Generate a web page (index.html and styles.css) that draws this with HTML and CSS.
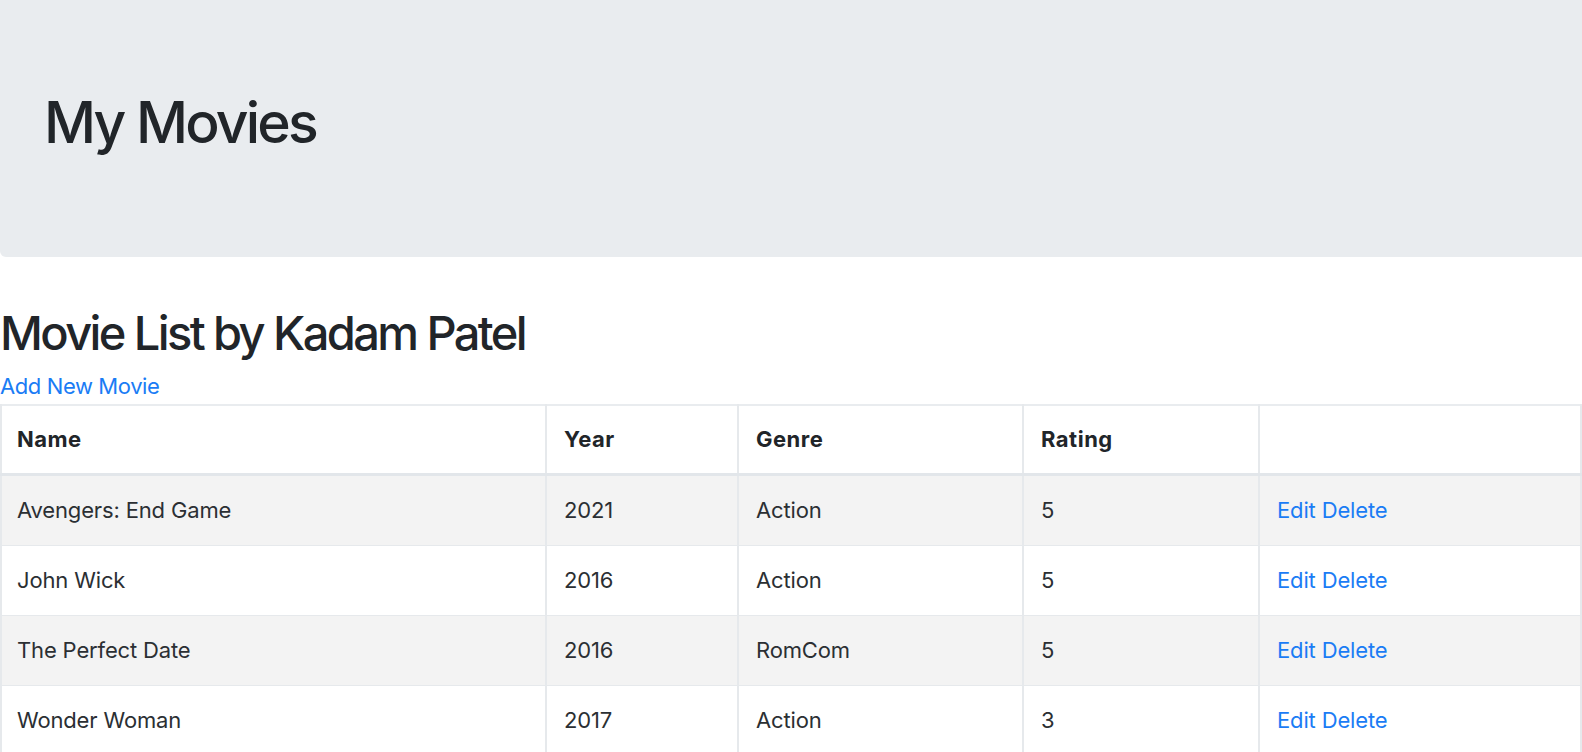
FILE: index.html
```html
<!DOCTYPE html>
<html lang="en">
<head>
<meta charset="utf-8">
<title>My Movies</title>
<link rel="stylesheet" href="styles.css">
</head>
<body>
<div class="jumbotron">
  <h1 class="title">My Movies</h1>
</div>
<main class="content">
  <h2 class="subtitle">Movie List by Kadam Patel</h2>
  <a class="link add-link" href="#">Add New Movie</a>
  <table class="movies">
    <colgroup>
      <col class="c-name"><col class="c-year"><col class="c-genre"><col class="c-rating"><col class="c-actions">
    </colgroup>
    <thead>
      <tr><th>Name</th><th>Year</th><th>Genre</th><th>Rating</th><th></th></tr>
    </thead>
    <tbody>
      <tr><td>Avengers: End Game</td><td>2021</td><td>Action</td><td>5</td><td><a class="link" href="#">Edit</a> <a class="link" href="#">Delete</a></td></tr>
      <tr><td>John Wick</td><td>2016</td><td>Action</td><td>5</td><td><a class="link" href="#">Edit</a> <a class="link" href="#">Delete</a></td></tr>
      <tr><td>The Perfect Date</td><td>2016</td><td>RomCom</td><td>5</td><td><a class="link" href="#">Edit</a> <a class="link" href="#">Delete</a></td></tr>
      <tr><td>Wonder Woman</td><td>2017</td><td>Action</td><td>3</td><td><a class="link" href="#">Edit</a> <a class="link" href="#">Delete</a></td></tr>
    </tbody>
  </table>
</main>
</body>
</html>
```
FILE: styles.css
```css
html, body {
  margin: 0;
  padding: 0;
  background: #fff;
}
body {
  font-family: Inter, "Liberation Sans", sans-serif;
  font-size: 24px;
  line-height: 36px;
  color: #212529;
  overflow: hidden;
}
.jumbotron {
  background: #e9ecef;
  height: 257px;
  box-sizing: border-box;
  padding: 88px 44px 0;
  border-radius: 0 0 0 6px;
}
.title {
  margin: 0;
  font-size: 57px;
  font-weight: 500;
  line-height: 70px;
  letter-spacing: -2.8px;
}
.content {
  padding-top: 47px;
}
.subtitle {
  margin: 0 0 6px;
  font-size: 47px;
  font-weight: 500;
  line-height: 58px;
  letter-spacing: -2.6px;
}
.link {
  color: #1a7cf5;
  text-decoration: none;
}
.add-link {
  display: block;
  font-size: 22px;
  line-height: 36px;
  letter-spacing: -0.4px;
}
.movies {
  border-collapse: collapse;
  width: 1582px;
  table-layout: fixed;
  border: 2px solid #e9ecef;
  border-right: 0;
}
.c-name { width: 545px; }
.c-year { width: 192px; }
.c-genre { width: 285px; }
.c-rating { width: 236px; }
.movies th, .movies td {
  text-align: left;
  padding: 17px 17px 17px 17px;
  border: 1px solid #e6e9ec;
  border-width: 1px 2px;
  line-height: 35px;
  vertical-align: middle;
}
.movies th:first-child, .movies td:first-child {
  padding-left: 15px;
}
.movies th {
  font-weight: 700;
  font-size: 22px;
  padding-top: 16px;
  padding-bottom: 16px;
  letter-spacing: 0.5px;
  border-bottom: 3px solid #e2e6ea;
}
.movies td {
  font-size: 22px;
  color: #2b2f33;
  letter-spacing: -0.15px;
}
.movies tbody tr:nth-child(odd) {
  background: #f3f3f3;
}
```
